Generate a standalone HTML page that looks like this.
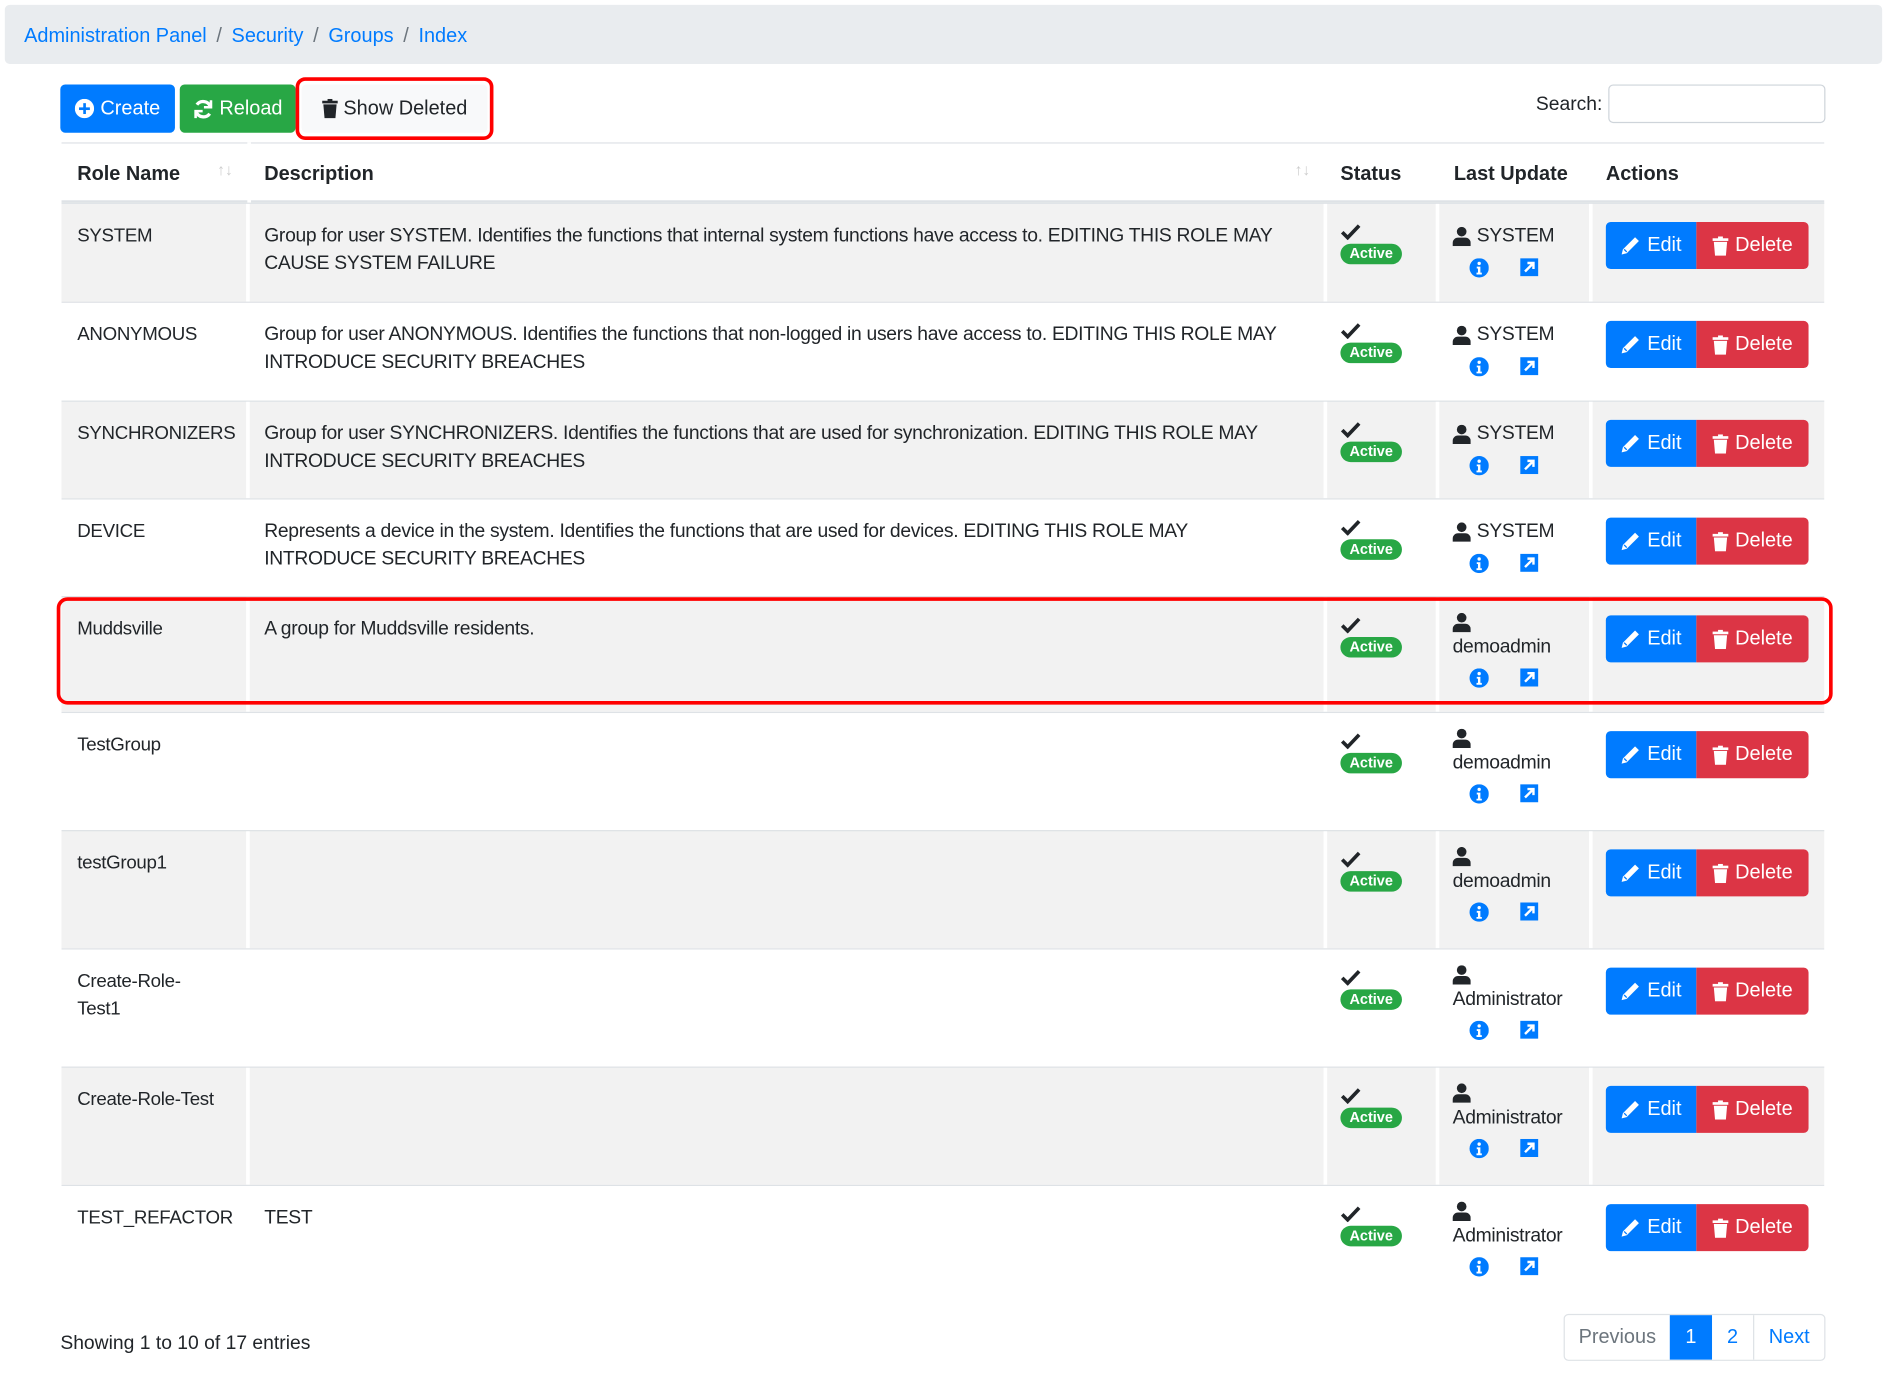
<!DOCTYPE html>
<html><head><meta charset="utf-8"><style>
*{box-sizing:border-box;margin:0;padding:0}
html,body{width:1891px;height:1382px;overflow:hidden;background:#fff}
#w{position:absolute;left:0;top:0;width:1567px;height:1146px;transform:scale(1.2065);transform-origin:0 0;font-family:"Liberation Sans",sans-serif;font-size:16px;color:#212529}
.a{position:absolute}
.bc{left:4px;top:4px;width:1556px;height:49px;background:#e9ecef;border-radius:4px;padding:0 16px;line-height:52px;font-size:16.5px;color:#007bff}
.bc span{color:#6c757d;margin:0 8px}
.btn{top:70px;height:40px;border-radius:4px;color:#fff;font-size:16.5px;display:flex;align-items:center;justify-content:center;gap:5px}
.row{left:51px;width:1461px;border-top:1px solid #dee2e6}
.g{background:#f2f2f2}
.vl{position:absolute;top:0;bottom:0;width:3px;background:#fff}
.t{position:absolute;line-height:22.5px;letter-spacing:-0.25px}
.badge{position:absolute;left:1111px;width:51px;height:17px;background:#28a745;border-radius:9px;color:#fff;font-size:12px;font-weight:bold;text-align:center;line-height:17px}
.eb{position:absolute;left:1331px;width:75px;height:39px;background:#007bff;border-radius:4px 0 0 4px;color:#fff;display:flex;align-items:center;justify-content:center;gap:5px;font-size:16.5px}
.db{position:absolute;left:1406px;width:93px;height:39px;background:#dc3545;border-radius:0 4px 4px 0;color:#fff;display:flex;align-items:center;justify-content:center;gap:5px;font-size:16.5px}
svg{display:block}
</style></head><body><div id="w">
<div class="a bc">Administration Panel<span>/</span>Security<span>/</span>Groups<span>/</span>Index</div>
<div class="a btn" style="left:50px;width:95px;background:#007bff"><svg width="16" height="16" viewBox="0 0 16 16"><circle cx="8" cy="8" r="8" fill="#fff"/><rect x="7" y="3.5" width="2.2" height="9" fill="#007bff"/><rect x="3.5" y="7" width="9" height="2.2" fill="#007bff"/></svg>Create</div>
<div class="a btn" style="left:149px;width:96px;background:#28a745"><svg width="17" height="17" viewBox="0 0 16 16" fill="none" stroke="#fff" stroke-width="2.6"><path d="M13.5 6A6 6 0 0 0 3 4.5"/><path d="M2.5 10A6 6 0 0 0 13 11.5"/><path d="M14 1v5.5H8.5" stroke-width="2"/><path d="M2 15V9.5h5.5" stroke-width="2"/></svg>Reload</div>
<div class="a btn" style="left:250px;width:154px;background:#f8f9fa;color:#212529"><svg width="13" height="16" viewBox="0 0 13 16"><rect x="0" y="1.5" width="13" height="2.2" fill="#212529"/><rect x="4.5" y="0" width="4" height="2" fill="#212529"/><path d="M1 4.5h11l-1 11.5H2z" fill="#212529"/></svg>Show Deleted</div>
<div class="a" style="left:245px;top:64px;width:164px;height:52px;border:3px solid #f00;border-radius:8px"></div>
<div class="a" style="left:1273px;top:78px;font-size:16px">Search:</div>
<div class="a" style="left:1333px;top:70px;width:180px;height:32px;border:1px solid #ced4da;border-radius:4px"></div>
<div class="a" style="left:51px;top:118px;width:1461px;height:1px;background:#dee2e6"></div>
<div class="a" style="left:51px;top:166px;width:1461px;height:2px;background:#dee2e6"></div>
<div class="a" style="top:135px;left:64px;font-weight:bold;font-size:16.5px">Role Name</div>
<div class="a" style="top:135px;left:219px;font-weight:bold;font-size:16.5px">Description</div>
<div class="a" style="top:135px;left:1111px;font-weight:bold;font-size:16.5px">Status</div>
<div class="a" style="top:135px;left:1205px;font-weight:bold;font-size:16.5px">Last Update</div>
<div class="a" style="top:135px;left:1331px;font-weight:bold;font-size:16.5px">Actions</div>
<div class="a" style="top:133px;left:180px;color:#ccc;font-size:13px">↑↓</div>
<div class="a" style="top:133px;left:1073px;color:#ccc;font-size:13px">↑↓</div>
<div class="a" style="left:205px;top:118px;width:3px;height:50px;background:#fff"></div>
<div id="rows"></div>
<div class="a" style="left:47px;top:495px;width:1472px;height:89px;border:3px solid #f00;border-radius:9px"></div>
<div class="a" style="left:50px;top:1105px;font-size:16px">Showing 1 to 10 of 17 entries</div>
<div class="a" style="left:1296px;top:1089px;width:217px;height:39px;border:1px solid #dee2e6;border-radius:4px;display:flex;font-size:16.5px;line-height:37px;overflow:hidden">
<div style="width:87px;text-align:center;color:#6c757d">Previous</div>
<div style="width:35px;text-align:center;background:#007bff;color:#fff">1</div>
<div style="width:35px;text-align:center;color:#007bff;border-right:1px solid #dee2e6">2</div>
<div style="flex:1;text-align:center;color:#007bff">Next</div></div>
</div>
<script>
var R=[["SYSTEM","Group for user SYSTEM. Identifies the functions that internal system functions have access to. EDITING THIS ROLE MAY CAUSE SYSTEM FAILURE","SYSTEM",168,82],
["ANONYMOUS","Group for user ANONYMOUS. Identifies the functions that non-logged in users have access to. EDITING THIS ROLE MAY INTRODUCE SECURITY BREACHES","SYSTEM",250,82],
["SYNCHRONIZERS","Group for user SYNCHRONIZERS. Identifies the functions that are used for synchronization. EDITING THIS ROLE MAY INTRODUCE SECURITY BREACHES","SYSTEM",332,81],
["DEVICE","Represents a device in the system. Identifies the functions that are used for devices. EDITING THIS ROLE MAY INTRODUCE SECURITY BREACHES","SYSTEM",413,81],
["Muddsville","A group for Muddsville residents.","demoadmin",494,96],
["TestGroup","","demoadmin",590,98],
["testGroup1","","demoadmin",688,98],
["Create-Role-<br>Test1","","Administrator",786,98],
["Create-Role-Test","","Administrator",884,98],
["TEST_REFACTOR","TEST","Administrator",982,93]];
var user='<svg width="15" height="16" viewBox="0 0 15 16"><circle cx="7.5" cy="4" r="4" fill="#212529"/><path d="M0 16v-2.5A4.5 4.5 0 0 1 4.5 9h6A4.5 4.5 0 0 1 15 13.5V16z" fill="#212529"/></svg>';
var info='<svg width="16" height="16" viewBox="0 0 16 16"><circle cx="8" cy="8" r="8" fill="#007bff"/><circle cx="8" cy="4.3" r="1.4" fill="#fff"/><path d="M6 7h3v5h1.2v1.5H5.8V12H7V8.5H6z" fill="#fff"/></svg>';
var ext='<svg width="15" height="15" viewBox="0 0 15 15"><rect width="15" height="15" fill="#007bff"/><path d="M4 11L11 4M6 4h5v5" stroke="#fff" stroke-width="2" fill="none"/></svg>';
var chk='<svg width="17" height="14" viewBox="0 0 17 14"><path d="M1.5 7.5l4.5 4.5L15.5 2" stroke="#212529" stroke-width="3" fill="none"/></svg>';
var pen='<svg width="17" height="17" viewBox="0 0 16 16"><path d="M11.5 1.5l3 3L5 14l-4 1 1-4z" fill="#fff"/><path d="M3 11l2 2" stroke="#007bff" stroke-width="1"/></svg>';
var tr='<svg width="14" height="16" viewBox="0 0 13 16"><rect x="0" y="1.5" width="13" height="2.2" fill="#fff"/><rect x="4.5" y="0" width="4" height="2" fill="#fff"/><path d="M1 4.5h11l-1 11.5H2z" fill="#fff"/></svg>';
var h='';
R.forEach(function(r,i){var t=r[3],H=r[4],g=i%2==0?' g':'';var sys=r[2]=="SYSTEM";
h+='<div class="a row'+g+'" style="top:'+t+'px;height:'+H+'px">'+(g?'<div class="vl" style="left:153px"></div><div class="vl" style="left:1046px"></div><div class="vl" style="left:1139px"></div><div class="vl" style="left:1266px"></div>':'')+'</div>';
h+='<div class="t" style="left:64px;top:'+(t+17)+'px;width:135px;font-size:15.5px">'+r[0]+'</div>';
h+='<div class="t" style="left:219px;top:'+(t+17)+'px;width:862px">'+r[1]+'</div>';
h+='<div class="a" style="left:1111px;top:'+(t+17)+'px">'+chk+'</div>';
h+='<div class="badge" style="top:'+(t+34)+'px">Active</div>';
if(sys){h+='<div class="a" style="left:1204px;top:'+(t+20)+'px">'+user+'</div><div class="t" style="left:1224px;top:'+(t+17)+'px">SYSTEM</div>';
h+='<div class="a" style="left:1218px;top:'+(t+46)+'px">'+info+'</div><div class="a" style="left:1260px;top:'+(t+46)+'px">'+ext+'</div>';}
else{h+='<div class="a" style="left:1204px;top:'+(t+14)+'px">'+user+'</div><div class="t" style="left:1204px;top:'+(t+32)+'px">'+r[2]+'</div>';
h+='<div class="a" style="left:1218px;top:'+(t+60)+'px">'+info+'</div><div class="a" style="left:1260px;top:'+(t+60)+'px">'+ext+'</div>';}
h+='<div class="eb" style="top:'+(t+16)+'px">'+pen+'Edit</div><div class="db" style="top:'+(t+16)+'px">'+tr+'Delete</div>';});
document.getElementById('rows').innerHTML=h;
</script>
</body></html>
